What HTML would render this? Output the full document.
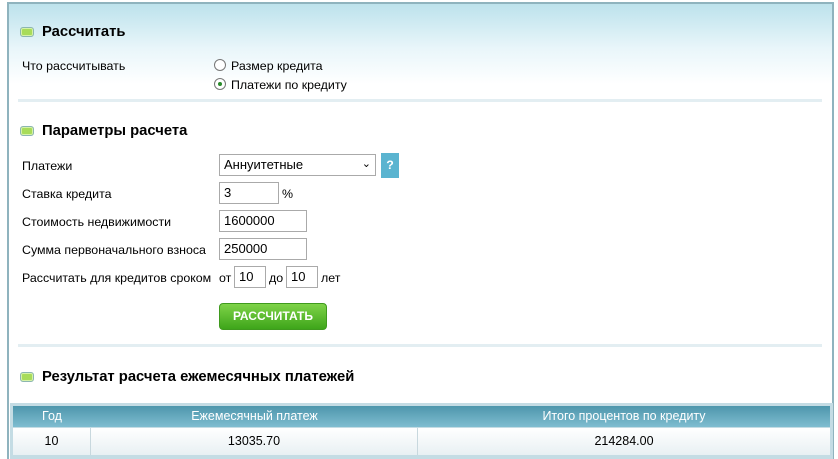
<!DOCTYPE html>
<html><head><meta charset="utf-8"><style>
*{margin:0;padding:0;box-sizing:border-box}
html,body{width:838px;height:459px;overflow:hidden}
body{background:#fff;font-family:"Liberation Sans",Arial,sans-serif;font-size:12.4px;color:#000}
#w{position:relative;width:838px;height:459px;overflow:hidden}
.frame{position:absolute;left:7px;top:2px;width:827px;height:457px;border:2px solid #8fb3be;border-bottom:none;background:linear-gradient(#bde2ec 0px,#e9f6fa 45px,#fff 80px)}
.a{position:absolute;white-space:nowrap}
h2{position:absolute;font-size:14.8px;font-weight:bold;left:42px}
.ic{position:absolute;left:20px;width:14px;height:10px;border-radius:3px;background:#a8dc5a;border:1px solid #8cb6b0;box-shadow:inset 0 0 0 1px #d6f2a8}
.sep{position:absolute;left:18px;width:804px;height:3px;background:#e3eef2}
.in{position:absolute;height:22px;border:1px solid #aaa;background:#fff;font-size:13px;padding:3px 4px;line-height:14px}
.rad{position:absolute;width:12px;height:12px;border-radius:50%;border:1px solid #777;background:#fff}
</style></head><body><div id="w">
<div class="frame"></div>
<div class="ic" style="top:27px"></div><h2 style="top:24px">Рассчитать</h2>
<div class="a" style="left:22px;top:59px">Что рассчитывать</div>
<div class="rad" style="left:214px;top:59px"></div><div class="a" style="left:231px;top:59px">Размер кредита</div>
<div class="rad" style="left:214px;top:78px"><div style="width:4px;height:4px;border-radius:50%;background:#2a8a2a;margin:3px"></div></div><div class="a" style="left:231px;top:78px">Платежи по кредиту</div>
<div class="sep" style="top:99px"></div>
<div class="ic" style="top:126px"></div><h2 style="top:123px">Параметры расчета</h2>
<div class="a" style="left:22px;top:159px">Платежи</div>
<div class="in" style="left:219px;top:154px;width:157px">Аннуитетные<span style="position:absolute;right:4px;top:2px;font-size:11px">&#8964;</span></div>
<div class="a" style="left:381px;top:153px;width:18px;height:25px;background:#5ab4d0;color:#fff;font-weight:bold;text-align:center;line-height:25px">?</div>
<div class="a" style="left:22px;top:187px">Ставка кредита</div>
<div class="in" style="left:219px;top:182px;width:60px">3</div><div class="a" style="left:282px;top:187px">%</div>
<div class="a" style="left:22px;top:215px">Стоимость недвижимости</div>
<div class="in" style="left:219px;top:210px;width:88px">1600000</div>
<div class="a" style="left:22px;top:243px">Сумма первоначального взноса</div>
<div class="in" style="left:219px;top:238px;width:88px">250000</div>
<div class="a" style="left:22px;top:271px">Рассчитать для кредитов сроком</div>
<div class="a" style="left:219px;top:271px">от</div><div class="in" style="left:234px;top:266px;width:32px">10</div>
<div class="a" style="left:269px;top:271px">до</div><div class="in" style="left:286px;top:266px;width:32px">10</div>
<div class="a" style="left:321px;top:271px">лет</div>
<div class="a" style="left:219px;top:303px;width:108px;height:27px;border-radius:4px;border:1px solid #3f9a1e;background:linear-gradient(#7ed348,#3ea51a);color:#fff;font-weight:bold;font-size:12px;text-align:center;line-height:25px">РАССЧИТАТЬ</div>
<div class="sep" style="top:344px"></div>
<div class="ic" style="top:372px"></div><h2 style="top:369px">Результат расчета ежемесячных платежей</h2>
<div class="a" style="left:10px;top:403px;width:823px;height:56px;background:#c4dce4"></div>
<div class="a" style="left:13px;top:406px;width:817px;height:21px;background:linear-gradient(#4e96ac,#7fbdd0);color:#fff;font-size:12.5px;line-height:21px">
<span class="a" style="left:0;width:78px;text-align:center">Год</span><span class="a" style="left:78px;width:327px;text-align:center">Ежемесячный платеж</span><span class="a" style="left:405px;width:412px;text-align:center">Итого процентов по кредиту</span></div>
<div class="a" style="left:13px;top:428px;width:817px;height:27px;background:linear-gradient(#fff,#e8f0f3);line-height:27px;font-size:12.5px">
<span class="a" style="left:0;width:78px;text-align:center;border-right:1px solid #c8d8de;height:27px">10</span><span class="a" style="left:78px;width:327px;text-align:center;border-right:1px solid #c8d8de;height:27px">13035.70</span><span class="a" style="left:405px;width:412px;text-align:center">214284.00</span></div>
</div></body></html>
